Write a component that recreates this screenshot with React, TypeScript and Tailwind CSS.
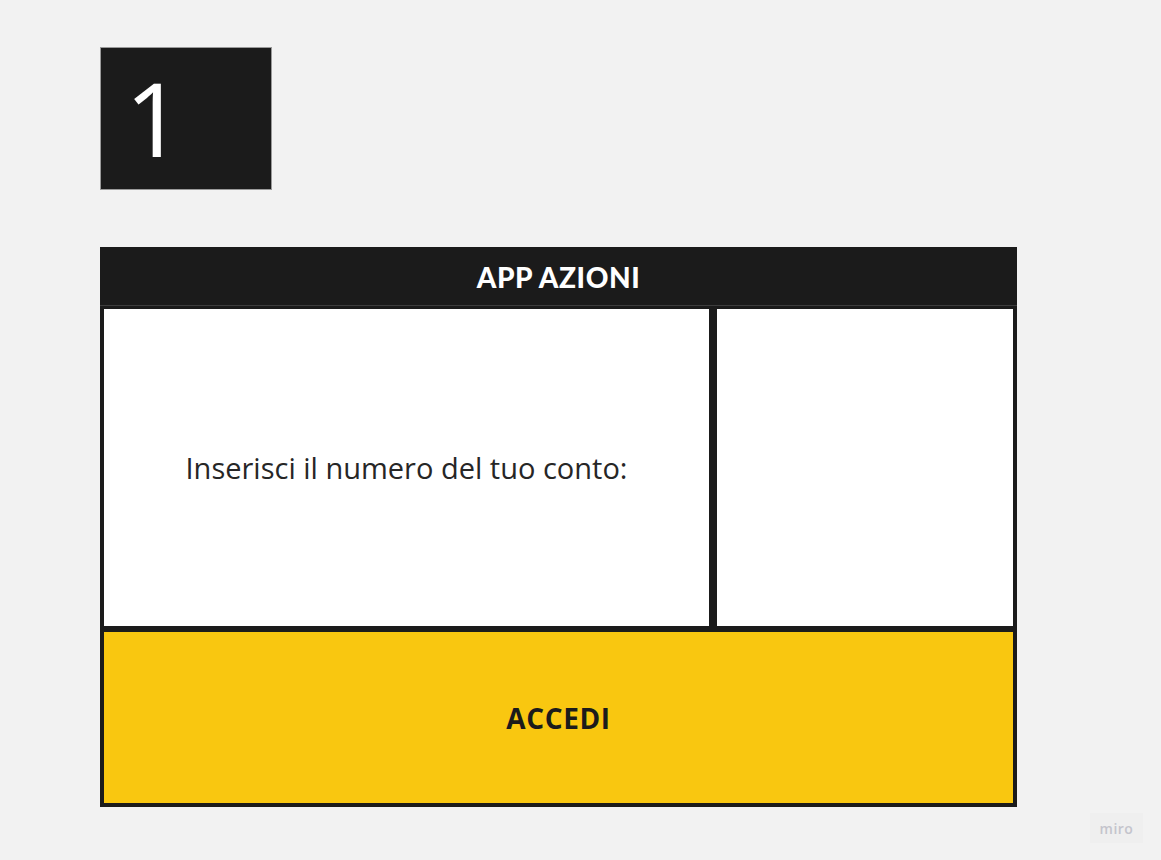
import React from "react";

export default function App() {
  return (
    <div className="relative w-[1161px] h-[860px] bg-[#f2f2f2] overflow-hidden font-['Open_Sans',sans-serif]">
      <div className="pt-[47px] pl-[100px]">
        <div className="w-[172px] h-[143px] bg-[#1b1b1b] border border-[#9a9a9a] flex items-start pl-[24px] pt-[10px]">
          <span className="text-white text-[102px] leading-[120px] font-normal">1</span>
        </div>
      </div>

      <div className="ml-[100px] mt-[57px] w-[917px] h-[560px] bg-[#1b1b1b] flex flex-col">
        <div className="h-[59px] shrink-0 flex items-center justify-center border-b border-[#3d3d3d]">
          <span className="text-white text-[28px] font-black tracking-[0.6px] font-['Lato',sans-serif] pt-[2px]">
            APP AZIONI
          </span>
        </div>
        <div className="flex flex-col px-[4px] pt-[3px] pb-[4px] gap-[6px] flex-1">
          <div className="flex gap-[8px] h-[317px]">
            <div className="w-[605px] bg-white flex items-center justify-center">
              <span className="text-[#262626] text-[29px]">Inserisci il numero del tuo conto:</span>
            </div>
            <div className="flex-1 bg-white" />
          </div>
          <div className="flex-1 bg-[#f9c710] flex items-center justify-center">
            <span className="text-[#1b1b1b] text-[28px] font-bold tracking-[0.6px]">ACCEDI</span>
          </div>
        </div>
      </div>

      <div className="absolute left-[1090px] top-[813px] w-[53px] h-[30px] bg-[#efefef] flex items-center justify-center">
        <span className="text-[#c4c4cc] text-[14px] font-semibold tracking-[0.5px]">miro</span>
      </div>
    </div>
  );
}
